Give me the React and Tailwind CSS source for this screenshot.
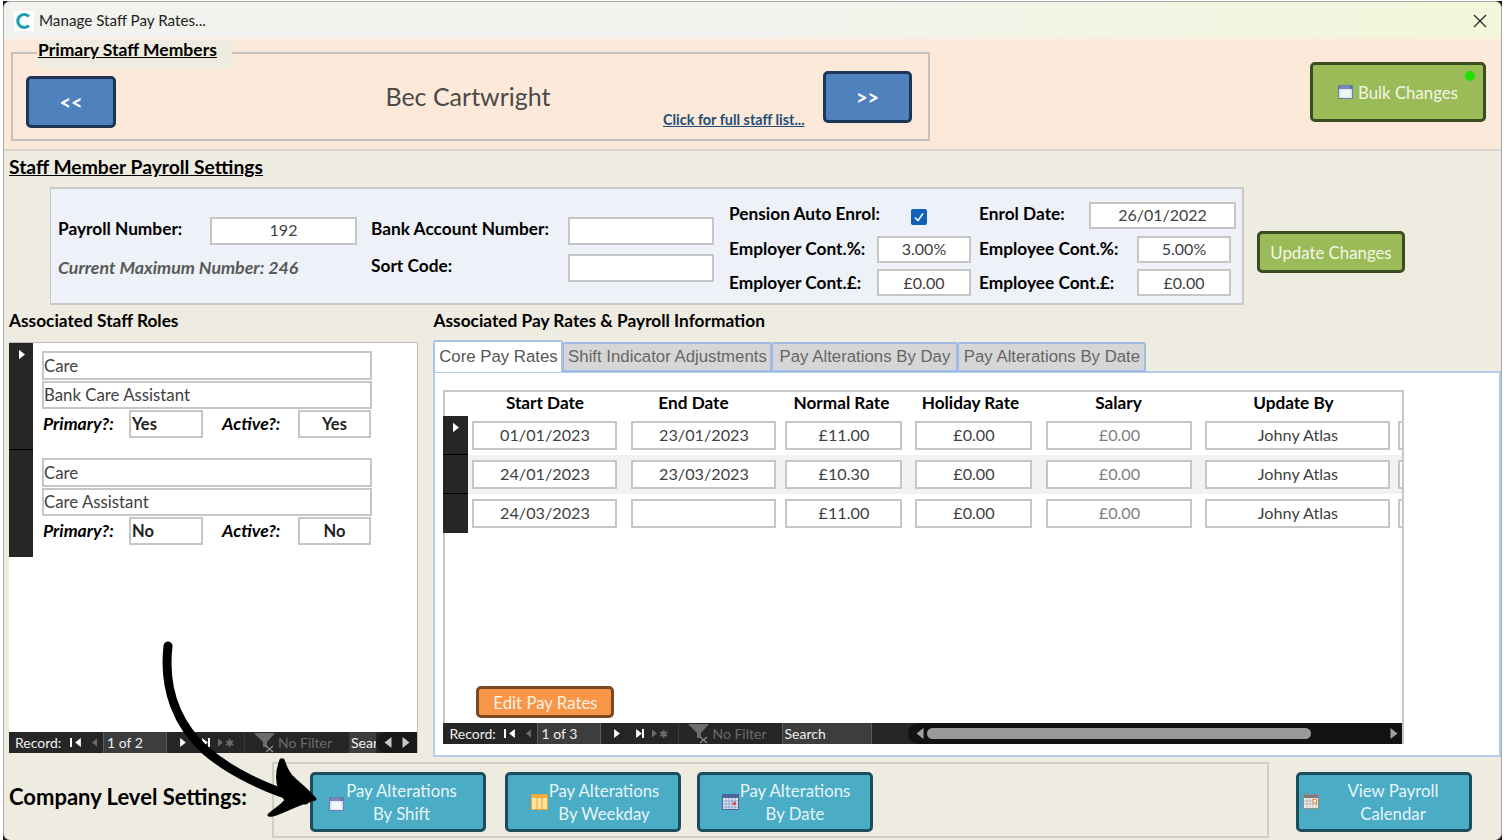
import React from 'react';

const TinyCal = ({ className = '' }) => (
  <svg viewBox="0 0 15 14" className={`w-[15px] h-[14px] shrink-0 ${className}`}>
    <rect x="0.5" y="0.5" width="14" height="13" fill="#dfe4f3" stroke="#6c7fb5" />
    <rect x="1" y="1" width="13" height="3" fill="#5a6ea8" />
    <path d="M3 1v3M5 1v3M7 1v3M9 1v3M11 1v3" stroke="#c7cfe6" strokeWidth="0.6" />
    <rect x="3" y="5" width="9" height="7" fill="#f4f6fb" />
  </svg>
);

const WeekIcon = () => (
  <svg viewBox="0 0 17 16" className="w-[17px] h-[16px] shrink-0">
    <rect x="0.5" y="0.5" width="16" height="15" fill="#fde6a0" stroke="#e8a33a" />
    <rect x="1" y="1" width="15" height="3" fill="#f2b143" />
    <path d="M6 4v11M11 4v11" stroke="#e8a33a" />
  </svg>
);

const DateIcon = () => (
  <svg viewBox="0 0 17 16" className="w-[17px] h-[16px] shrink-0">
    <rect x="0.5" y="0.5" width="16" height="15" fill="#e6ebf7" stroke="#50649c" />
    <rect x="1" y="1" width="15" height="3" fill="#50649c" />
    <path d="M1 7h15M1 10h15M1 13h15M4 4v11M7 4v11M10 4v11M13 4v11" stroke="#7d8fc4" strokeWidth="0.8" />
    <rect x="11" y="8" width="3" height="3" fill="#d9573f" />
  </svg>
);

const CalendarGridIcon = () => (
  <svg viewBox="0 0 16 15" className="w-[16px] h-[15px] shrink-0">
    <rect x="0.5" y="0.5" width="15" height="14" fill="#f1efe9" stroke="#8d8d8d" />
    <rect x="1" y="1" width="14" height="3" fill="#7c7c7c" />
    <path d="M1 7h14M1 10h14M4 4v10M7 4v10M10 4v10M13 4v10" stroke="#a8a8a8" strokeWidth="0.7" />
    <rect x="10" y="5.5" width="3.5" height="3.5" fill="#fff" stroke="#ef8b3a" />
  </svg>
);

// little triangle used by the record selectors and nav bars
const Tri = ({ left, className = 'fill-white', w = 7, h = 11 }) => (
  <svg viewBox="0 0 7 11" width={w} height={h} className={`shrink-0 ${className}`}>
    <path d={left ? 'M7 0v11L0 5.5z' : 'M0 0v11l7-5.5z'} />
  </svg>
);

const Filter = () => (
  <svg viewBox="0 0 22 20" className="w-[22px] h-[20px] shrink-0">
    <path d="M0 0h21L13 9v5H9V9z" fill="#6d6d6d" />
    <path d="M12 13l7 6M19 13l-7 6" stroke="#8b8b8b" strokeWidth="1.4" />
  </svg>
);

const NavBar = ({ total, children, className = '' }) => (
  <div className={`h-[21px] shrink-0 bg-[#262626] flex items-center text-[14px] text-[#f0f0f0] ${className}`}>
    <span className="ml-[6px] w-[54px]">Record:</span>
    <div className="w-[4px] ml-[1px] mr-[1px] h-[9px] border-l-2 border-white"></div>
    <Tri left w={6} h={9} />
    <span className="ml-[11px]"><Tri left w={5} h={9} className="fill-[#6b6b6b]" /></span>
    <div className="ml-[6px] w-[64px] h-[21px] bg-[#3d3d3d] border-x border-[#5c5c5c] pl-[3px] leading-[21px]">1 of {total}</div>
    <span className="ml-[13px]"><Tri w={6} h={9} /></span>
    <span className="ml-[16px] flex items-center"><Tri w={6} h={9} /><div className="w-[2px] h-[9px] bg-white"></div></span>
    <span className="ml-[8px] flex items-center gap-[2px]">
      <Tri w={5} h={9} className="fill-[#6b6b6b]" />
      <span className="text-[#6b6b6b] text-[11px] leading-none">✱</span>
    </span>
    <div className="ml-[10px] mr-[9px] w-px h-[21px] bg-[#3a3a3a]"></div>
    <Filter />
    <span className="ml-[2px] text-[#6b6b6b] whitespace-nowrap">No Filter</span>
    {children}
  </div>
);

const Field = ({ className = '', children }) => (
  <div className={`border-2 border-[#c6c6c6] bg-white flex items-center text-[#3f3f3f] ${className}`}>{children}</div>
);

const ActionBtn = ({ className = '', children }) => (
  <button className={`border-[3px] rounded-[5px] flex items-center justify-center text-[16.8px] leading-[23px] ${className}`}>
    {children}
  </button>
);

const Label = ({ className = '', children }) => (
  <span className={`font-bold text-[17.3px] text-black whitespace-nowrap ${className}`}>{children}</span>
);

const PayField = ({ className = '', children, shaded }) => (
  <Field className={`h-[29px] justify-center text-[16.2px] ${shaded ? 'bg-[#f0f0f0]' : ''} ${className}`}>{children}</Field>
);

const payRows = [
  { start: '01/01/2023', end: '23/01/2023', normal: '£11.00', current: true },
  { start: '24/01/2023', end: '23/03/2023', normal: '£10.30', shaded: true },
  { start: '24/03/2023', end: '', normal: '£11.00' },
];

const roles = [
  { dept: 'Care', role: 'Bank Care Assistant', primary: 'Yes', active: 'Yes', current: true },
  { dept: 'Care', role: 'Care Assistant', primary: 'No', active: 'No' },
];

const tabs = [
  { name: 'Shift Indicator Adjustments', width: 'w-[210px]' },
  { name: 'Pay Alterations By Day', width: 'w-[187px]' },
  { name: 'Pay Alterations By Date', width: 'w-[189px]' },
];

export default function App() {
  return (
    <div className="relative w-[1506px] h-[840px] bg-white overflow-hidden font-[Lato]">
      <div className="ml-[3px] mt-[1px] w-[1499px] h-[839px] bg-[#1a1a1a]">
      <div className="w-full h-full bg-[#eeebe0] border-t border-l border-r border-[#a9a9a9] rounded-t-[7px] rounded-b-[7px] overflow-hidden flex flex-col">
        {/* Title bar */}
        <div className="h-[37px] shrink-0 bg-gradient-to-r from-[#f2f3ef] via-[#f2f3ee] to-[#f4f6da] flex items-center pl-[10px] pr-[14px]">
          <svg viewBox="0 0 20 20" className="w-[20px] h-[20px] bg-white">
            <path d="M15 5.5A6.5 6.5 0 1 0 15 14.5" fill="none" stroke="#1f9fb4" strokeWidth="3.2" />
          </svg>
          <span className="ml-[5px] text-[15.2px] text-[#222]">Manage Staff Pay Rates...</span>
          <svg viewBox="0 0 14 14" className="ml-auto w-[14px] h-[14px]">
            <path d="M1 1l12 12M13 1L1 13" stroke="#222" strokeWidth="1.2" />
          </svg>
        </div>

        {/* Header strip */}
        <div className="h-[112px] shrink-0 bg-[#fde9da] border-b-2 border-[#d8d5cd] flex items-start pl-[7px]">
          <div className="relative mt-[13px] w-[919px] h-[89px] border-2 border-[#c4c2bc] flex items-center pl-[13px]">
            <div className="absolute -top-[14px] left-[24px] w-[195px] h-[28px] bg-[#eeebe0] pl-[1px] font-bold text-[17.5px] text-black underline leading-[20px] whitespace-nowrap">
              Primary Staff Members
            </div>
            <button className="mt-[11px] w-[90px] h-[52px] bg-[#4f81bd] border-[3px] border-[#1d3557] rounded-[5px] text-white font-bold text-[20px]">&lt;&lt;</button>
            <div className="ml-[248px] w-[208px] text-[25px] text-[#4a4a4a] text-center">Bec Cartwright</div>
            <a className="mt-[46px] ml-[91px] w-[144px] text-[14.4px] font-bold text-[#1f4e79] underline whitespace-nowrap">Click for full staff list...</a>
            <button className="ml-[16px] w-[89px] h-[52px] bg-[#4f81bd] border-[3px] border-[#1d3557] rounded-[5px] text-white font-bold text-[20px]">&gt;&gt;</button>
          </div>
          <div className="relative mt-[23px] ml-[380px] w-[176px] h-[60px]">
            <ActionBtn className="w-full h-full bg-[#9bbb59] border-[#3c4d22] text-[#f2f6e6] gap-[5px]">
              <TinyCal />
              Bulk Changes
            </ActionBtn>
            <span className="absolute top-[9px] right-[11px] w-[10px] h-[10px] rounded-full bg-[#22e000]"></span>
          </div>
        </div>

        {/* Payroll settings */}
        <div className="pl-[5px] pt-[4px] h-[23px] box-content shrink-0 font-bold text-[19.3px] leading-[23px] text-black">
          <span className="underline">Staff Member Payroll Settings</span>
        </div>
        <div className="flex items-start mt-[9px] ml-[46px] shrink-0">
          <div className="w-[1194px] h-[118px] bg-[#eef1f7] border-t-2 border-r-2 border-b-2 border-l border-[#c9c9c9] flex pl-[7px]">
            <div className="w-[313px] mt-[28px]">
              <div className="flex items-center h-[28px]">
                <Label className="w-[152px] pb-[4px]">Payroll Number:</Label>
                <Field className="w-[147px] h-[28px] justify-center text-[16px] pb-[3px]">192</Field>
              </div>
              <div className="mt-[10px] italic font-bold text-[17.8px] leading-[24px] text-[#595959] whitespace-nowrap">Current Maximum Number: 246</div>
            </div>
            <div className="w-[358px] mt-[28px]">
              <div className="flex items-center h-[28px]">
                <Label className="w-[197px] pb-[4px]">Bank Account Number:</Label>
                <Field className="w-[146px] h-[28px]"></Field>
              </div>
              <div className="flex items-center h-[28px] mt-[9px]">
                <Label className="w-[197px] pb-[4px]">Sort Code:</Label>
                <Field className="w-[146px] h-[28px]"></Field>
              </div>
            </div>
            <div className="w-[250px] mt-[13px]">
              <div className="flex items-center h-[26px]">
                <Label className="w-[182px] pb-[2px]">Pension Auto Enrol:</Label>
                <span className="mt-[3px] w-[16px] h-[16px] bg-[#0f62b8] rounded-[2px] flex items-center justify-center">
                  <svg viewBox="0 0 12 12" className="w-[12px] h-[12px]"><path d="M2 6.5l3 3 5-7" fill="none" stroke="#fff" strokeWidth="1.5" /></svg>
                </span>
              </div>
              <div className="flex items-center h-[27px] mt-[8px]">
                <Label className="w-[148px] pb-[2px]">Employer Cont.%:</Label>
                <Field className="w-[94px] h-[27px] justify-center text-[16px] pb-[2px]">3.00%</Field>
              </div>
              <div className="flex items-center h-[27px] mt-[6px]">
                <Label className="w-[148px]">Employer Cont.£:</Label>
                <Field className="w-[94px] h-[27px] justify-center text-[16px]">£0.00</Field>
              </div>
            </div>
            <div className="mt-[13px]">
              <div className="flex items-center h-[26px]">
                <Label className="w-[110px] pb-[2px]">Enrol Date:</Label>
                <Field className="w-[147px] h-[27px] justify-center text-[16px]">26/01/2022</Field>
              </div>
              <div className="flex items-center h-[27px] mt-[8px]">
                <Label className="w-[158px] pb-[2px]">Employee Cont.%:</Label>
                <Field className="w-[94px] h-[27px] justify-center text-[16px] pb-[2px]">5.00%</Field>
              </div>
              <div className="flex items-center h-[27px] mt-[6px]">
                <Label className="w-[158px]">Employee Cont.£:</Label>
                <Field className="w-[94px] h-[27px] justify-center text-[16px]">£0.00</Field>
              </div>
            </div>
          </div>
          <ActionBtn className="ml-[13px] mt-[44px] w-[148px] h-[42px] bg-[#9bbb59] border-[#3c4d22] text-[#f2f6e6]">
            Update Changes
          </ActionBtn>
        </div>

        {/* Roles and pay rates */}
        <div className="flex mt-[6px] pl-[5px] shrink-0">
          <div className="w-[410px] mr-[15px]">
            <div className="h-[31px] font-bold text-[17.3px] text-black leading-[20px]">Associated Staff Roles</div>
            <div className="h-[411px] bg-white border-t border-r border-[#bdbdbd] flex flex-col">
              <div className="h-[389px]">
                {roles.map((r, i) => (
                  <div key={i} className="flex h-[107px]">
                    <div className={`w-[24px] shrink-0 bg-[#262626] pt-[6px] pl-[10px] ${i === 0 ? 'border-b border-black' : ''}`}>
                      {r.current && <Tri w={6} h={11} />}
                    </div>
                    <div className="ml-[9px] pt-[8px] w-[330px]">
                      <Field className="h-[29px] text-[16.8px]">{r.dept}</Field>
                      <Field className="h-[28px] mt-[1px] text-[16.8px]">{r.role}</Field>
                      <div className="flex items-center mt-[1px]">
                        <span className="w-[87px] pl-[1px] italic font-bold text-[17.6px] text-black">Primary?:</span>
                        <Field className="w-[74px] h-[28px] pl-[1px] font-bold text-[16.5px] text-[#222]">{r.primary}</Field>
                        <span className="w-[77px] pl-[19px] box-content italic font-bold text-[17.6px] text-black whitespace-nowrap">Active?:</span>
                        <Field className="ml-[-1px] w-[73px] h-[28px] justify-center font-bold text-[16.5px] text-[#222]">{r.active}</Field>
                      </div>
                    </div>
                  </div>
                ))}
              </div>
              <NavBar total={2}>
                <div className="ml-[17px] w-[27px] h-[21px] bg-[#3d3d3d] pl-[2px] leading-[21px] overflow-hidden">Sear</div>
                <div className="flex-1 h-[21px] bg-[#191919] rounded-l-full flex items-center justify-around pl-[3px] pr-[3px]">
                  <Tri left className="fill-[#c8c8c8]" w={8} h={11} />
                  <Tri className="fill-[#c8c8c8]" w={8} h={11} />
                </div>
              </NavBar>
            </div>
          </div>

          <div className="w-[1069px]">
            <div className="h-[29px] font-bold text-[17.3px] text-black leading-[20px]">Associated Pay Rates &amp; Payroll Information</div>
            <div className="flex h-[32px] items-end text-[16.8px] font-[Liberation_Sans]">
              <div className="relative z-10 h-[32px] w-[130px] bg-white border-2 border-b-0 border-[#a9c3e8] rounded-t-[3px] flex items-center justify-center text-[#555]">Core Pay Rates</div>
              {tabs.map(t => (
                <div key={t.name} className={`h-[30px] ${t.width} bg-[#d6d6d6] border-2 border-[#9dbbe3] rounded-t-[3px] -ml-px flex items-center justify-center text-[#666] whitespace-nowrap`}>{t.name}</div>
              ))}
            </div>
            <div className="h-[386px] -mt-[1px] bg-white border-2 border-[#b5cbea] pl-[8px] pt-[17px]">
              <div className="w-[961px] h-[354px] border-t-2 border-l-2 border-r-2 border-[#c8c8c8] flex flex-col">
                <div className="h-[24px] flex text-[17.2px] font-bold text-black leading-[22px] text-center whitespace-nowrap">
                  <span className="w-[27px]"></span>
                  <span className="w-[145px]">Start Date</span>
                  <span className="w-[152px]">End Date</span>
                  <span className="w-[144px]">Normal Rate</span>
                  <span className="w-[114px]">Holiday Rate</span>
                  <span className="w-[182px]">Salary</span>
                  <span className="w-[168px]">Update By</span>
                </div>
                <div className="flex-1">
                  {payRows.map((row, i) => (
                    <div key={i} className={`flex h-[39px] overflow-hidden -ml-[2px] ${row.shaded ? 'bg-[#f2f2f2]' : ''}`}>
                      <div className={`w-[25px] shrink-0 bg-[#262626] pt-[6px] pl-[10px] ${i < 2 ? 'border-b border-black' : ''}`}>
                        {row.current && <Tri w={6} h={11} />}
                      </div>
                      <div className="flex items-center pl-[4px]">
                        <PayField shaded={row.shaded} className="w-[145px] shrink-0">{row.start}</PayField>
                        <PayField shaded={row.shaded} className="w-[145px] shrink-0 ml-[14px]">{row.end}</PayField>
                        <PayField shaded={row.shaded} className="w-[117px] shrink-0 ml-[9px]">{row.normal}</PayField>
                        <PayField shaded={row.shaded} className="w-[117px] shrink-0 ml-[13px]">£0.00</PayField>
                        <PayField shaded={row.shaded} className="w-[146px] shrink-0 ml-[14px] text-[#7f7f7f]">£0.00</PayField>
                        <PayField shaded={row.shaded} className="w-[185px] shrink-0 ml-[13px]">Johny Atlas</PayField>
                        <PayField shaded={row.shaded} className="w-[20px] ml-[8px] shrink-0"></PayField>
                      </div>
                    </div>
                  ))}
                </div>
                <ActionBtn className="ml-[31px] mb-[5px] w-[138px] h-[32px] bg-[#f79646] border-[#7a4a1e] text-[#fdf0e3]">
                  Edit Pay Rates
                </ActionBtn>
                <NavBar total={3} className="-ml-[2px]">
                  <div className="ml-[16px] w-[90px] h-[21px] bg-[#3d3d3d] border-x border-[#5c5c5c] pl-[1px] leading-[21px]">Search</div>
                  <div className="ml-[36px] flex-1 h-[21px] bg-[#131313] rounded-l-full flex items-center pl-[8px] pr-[4px]">
                    <Tri left className="fill-[#a0a0a0]" w={8} h={11} />
                    <div className="ml-[3px] w-[384px] h-[11px] bg-[#9a9a9a] rounded-full"></div>
                    <Tri className="fill-[#a0a0a0] ml-auto" w={8} h={11} />
                  </div>
                </NavBar>
              </div>
            </div>
          </div>
        </div>

        {/* Company level */}
        <div className="flex items-center pl-[5px] shrink-0 mt-[8px]">
          <div className="w-[263px] mb-[10px] font-bold text-[22px] text-black whitespace-nowrap">Company Level Settings:</div>
          <div className="w-[997px] h-[76px] border-2 border-[#cfcdc6] flex items-center pl-[36px] -mt-[3px]">
            <ActionBtn className="w-[176px] h-[60px] mt-[3px] bg-[#4bacc6] border-[#1d4c5c] text-[#e6f5f8] gap-[2px] pr-[10px]">
              <TinyCal className="mt-[4px]" />
              <span className="text-center">Pay Alterations<br />By Shift</span>
            </ActionBtn>
            <ActionBtn className="ml-[19px] w-[176px] h-[60px] mt-[3px] bg-[#4bacc6] border-[#1d4c5c] text-[#e6f5f8] gap-[1px] pl-[4px]">
              <WeekIcon />
              <span className="text-center">Pay Alterations<br />By Weekday</span>
            </ActionBtn>
            <ActionBtn className="ml-[16px] w-[176px] h-[60px] mt-[3px] bg-[#4bacc6] border-[#1d4c5c] text-[#e6f5f8] gap-[1px] pl-[2px]">
              <DateIcon />
              <span className="text-center">Pay Alterations<br />By Date</span>
            </ActionBtn>
          </div>
          <ActionBtn className="ml-[27px] w-[176px] h-[60px] bg-[#4bacc6] border-[#1d4c5c] text-[#e6f5f8] pr-[2px]">
            <CalendarGridIcon />
            <span className="w-[140px] ml-[4px] text-center">View Payroll<br />Calendar</span>
          </ActionBtn>
        </div>
      </div>
      </div>

      {/* Annotation arrow over the form */}
      <svg viewBox="0 0 1506 840" className="absolute inset-0 w-[1506px] h-[840px] pointer-events-none">
        <path d="M168 646C163 690 178 725 205 750C230 772 268 790 305 800" fill="none" stroke="#000" strokeWidth="9" strokeLinecap="round" />
        <path d="M283 760c3 8 5 14 12 20 7 6 14 12 20 19-12 3-24 9-34 13-4 2-9 4-12 3 6-6 13-9 17-15-8-10-12-22-5-40z" fill="#000" stroke="#000" strokeWidth="3" strokeLinejoin="round" />
      </svg>
    </div>
  );
}
